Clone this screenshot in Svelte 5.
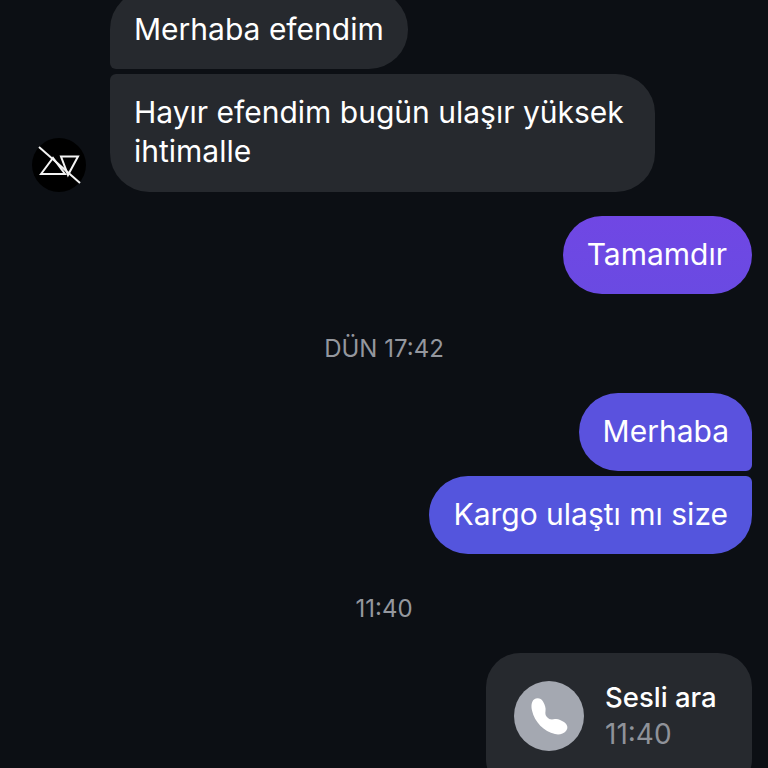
<script>
    const timeLabelA = "DÜN 17:42";
    const timeLabelB = "11:40";
</script>

<main class="thread">
    <div class="group incoming">
        <div class="avatar">
            <svg viewBox="0 0 54 54" width="54" height="54">
                <circle cx="27" cy="27" r="27" fill="#000" />
                <g fill="none" stroke="#f4f4f4" stroke-width="2">
                    <path d="M9 36 L21 20 L33 36 Z" />
                    <path d="M29 18.5 L46 18.5 L36 37 Z" />
                    <path d="M7 9 L48 45" />
                </g>
            </svg>
        </div>
        <div class="stack">
            <div class="bubble in first">Merhaba efendim</div>
            <div class="bubble in last wide">Hayır efendim bugün ulaşır yüksek ihtimalle</div>
        </div>
    </div>

    <div class="bubble out solo tamam">Tamamdır</div>

    <div class="time first-time">{timeLabelA}</div>

    <div class="stack right">
        <div class="bubble out top merhaba">Merhaba</div>
        <div class="bubble out bottom kargo">Kargo ulaştı mı size</div>
    </div>

    <div class="time second-time">{timeLabelB}</div>

    <div class="call">
        <div class="call-icon">
            <svg viewBox="0 0 70 70" width="70" height="70">
                <circle cx="35" cy="35" r="35" fill="#a4a8b1" />
                <path fill="#fff" d="M20 18.5 C23 16.5 27 17 29 20.5 C31 24 32 27 31.5 30 C31 33 31.5 35 34 37 C36.5 39 38.5 38.5 41 38 C44 37.5 47 39 50 41 C53.5 43.5 54.5 47 52 50 C49.5 53 45 54 41 53 C30 50.5 20.5 41 18 29.5 C17 25 17.5 20.5 20 18.5 Z" />
            </svg>
        </div>
        <div class="call-text">
            <div class="call-title">Sesli ara</div>
            <div class="call-time">11:40</div>
        </div>
    </div>
</main>

<style>
    :global(body) {
        margin: 0;
        background: #0c0f14;
    }

    .thread {
        height: 768px;
        overflow: hidden;
        box-sizing: border-box;
        padding: 0 16px 0 32px;
        display: flex;
        flex-direction: column;
        font-family: Inter, "Liberation Sans", sans-serif;
        color: #fff;
        font-size: 30px;
        line-height: 39px;
    }

    .group {
        display: flex;
        align-items: flex-end;
        gap: 24px;
        margin-top: -10px;
    }

    .avatar {
        width: 54px;
        height: 54px;
        flex: none;
    }

    .avatar svg {
        display: block;
    }

    .stack {
        display: flex;
        flex-direction: column;
        gap: 5px;
        align-items: flex-start;
    }

    .stack.right {
        align-items: flex-end;
    }

    .bubble {
        box-sizing: border-box;
        padding: 19px 24px 20px;
        background: #26292e;
    }

    .in.first {
        border-radius: 39px 39px 39px 6px;
        height: 79px;
        padding-top: 20px;
    }

    .in.last {
        border-radius: 6px 39px 39px 39px;
        padding-bottom: 21px;
    }

    .wide {
        width: 545px;
    }

    .out {
        color: #fff;
    }

    .solo {
        align-self: flex-end;
        border-radius: 39px;
        margin-top: 24px;
    }

    .tamam {
        background: linear-gradient(#7047e4, #6a4ae2);
        padding-right: 25px;
    }

    .top {
        border-radius: 39px 39px 6px 39px;
        background: #5a52de;
        padding-right: 23px;
    }

    .bottom {
        border-radius: 39px 6px 39px 39px;
        background: #5455dd;
    }

    .time {
        align-self: center;
        color: #94979e;
        font-size: 24px;
        line-height: 30px;
        margin-right: 16px;
    }

    .first-time {
        margin-top: 40px;
        margin-bottom: 29px;
    }

    .second-time {
        margin-top: 40px;
        margin-bottom: 29px;
    }

    .call {
        align-self: flex-end;
        flex: none;
        width: 266px;
        height: 140px;
        box-sizing: border-box;
        background: #26292e;
        border-radius: 34px;
        padding: 28px;
        display: flex;
        gap: 21px;
    }

    .call-icon {
        flex: none;
    }

    .call-icon svg {
        display: block;
    }

    .call-title {
        font-size: 27.5px;
        font-weight: 550;
        line-height: 32px;
    }

    .call-time {
        color: #8f9299;
        font-size: 28px;
        line-height: 34px;
        margin-top: 4px;
    }
</style>
